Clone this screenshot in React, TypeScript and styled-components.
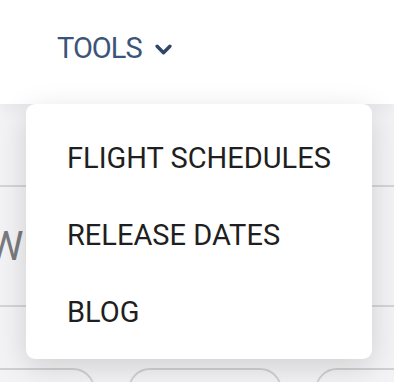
import React from 'react';
import styled, { createGlobalStyle } from 'styled-components';

const menuItems = ['FLIGHT SCHEDULES', 'RELEASE DATES', 'BLOG'];
const pills = [
  { width: 120 },
  { width: 154 },
  { width: 140 },
];

const App = () => {
  return (
    <>
      <GlobalStyle />
      <Page>
        <Header>
          <NavButton type="button">
            TOOLS
            <Chevron viewBox="0 0 16 10" aria-hidden="true">
              <path d="M2 2l6 6 6-6" />
            </Chevron>
          </NavButton>
        </Header>
        <Content>
          <Row $height={83} />
          <Row $height={120}>
            <Question>Where to?</Question>
          </Row>
          <PillRow>
            {pills.map((p, i) => (
              <Pill key={i} style={{ width: p.width }} />
            ))}
          </PillRow>
        </Content>
        <Dropdown>
          {menuItems.map((item) => (
            <MenuItem key={item} href="#">
              {item}
            </MenuItem>
          ))}
        </Dropdown>
      </Page>
    </>
  );
};

export default App;

const GlobalStyle = createGlobalStyle`
  html, body {
    margin: 0;
    padding: 0;
    background: #ffffff;
    font-family: Roboto, "Liberation Sans", sans-serif;
  }
  * {
    box-sizing: border-box;
  }
`;

const Page = styled.div`
  position: relative;
  width: 394px;
  height: 382px;
  overflow: hidden;
  background: #f3f3f5;
`;

const Header = styled.header`
  position: relative;
  z-index: 2;
  height: 104px;
  background: #ffffff;
  display: flex;
  align-items: center;
  padding-left: 57px;
  padding-bottom: 8px;
  box-shadow: 0 6px 14px rgba(0, 0, 0, 0.05);
`;

const NavButton = styled.button`
  display: flex;
  align-items: center;
  gap: 13px;
  border: none;
  background: transparent;
  padding: 0;
  font-family: Roboto, "Liberation Sans", sans-serif;
  font-size: 29px;
  letter-spacing: -1px;
  color: #3b5579;
  cursor: pointer;
`;

const Chevron = styled.svg`
  width: 17px;
  height: 11px;
  margin-top: 2px;
  fill: none;
  stroke: #2e4669;
  stroke-width: 3.2;
  stroke-linecap: round;
  stroke-linejoin: round;
`;

const Content = styled.main`
  display: flex;
  flex-direction: column;
`;

const Row = styled.div<{ $height: number }>`
  height: ${({ $height }) => $height}px;
  border-bottom: 2px solid #d4d4d8;
  display: flex;
  align-items: center;
`;

const Question = styled.h2`
  margin: 0 0 0 -12px;
  font-family: Roboto, "Liberation Sans", sans-serif;
  font-weight: 400;
  font-size: 40px;
  color: #7a7a7e;
  white-space: nowrap;
`;

const PillRow = styled.div`
  display: flex;
  gap: 33px;
  margin-top: 61px;
  margin-left: -25px;
`;

const Pill = styled.div`
  flex: none;
  height: 44px;
  border: 2px solid #d0d0d4;
  border-radius: 22px;
`;

const Dropdown = styled.nav`
  position: absolute;
  z-index: 3;
  top: 104px;
  left: 26px;
  width: 346px;
  height: 255px;
  padding: 15px 0 8px 41px;
  background: #ffffff;
  border-radius: 9px;
  box-shadow: 0 8px 30px rgba(0, 0, 0, 0.15);
  display: flex;
  flex-direction: column;
`;

const MenuItem = styled.a`
  height: 77px;
  display: flex;
  align-items: center;
  font-size: 29px;
  color: #1f1f21;
  text-decoration: none;
  white-space: nowrap;
`;
